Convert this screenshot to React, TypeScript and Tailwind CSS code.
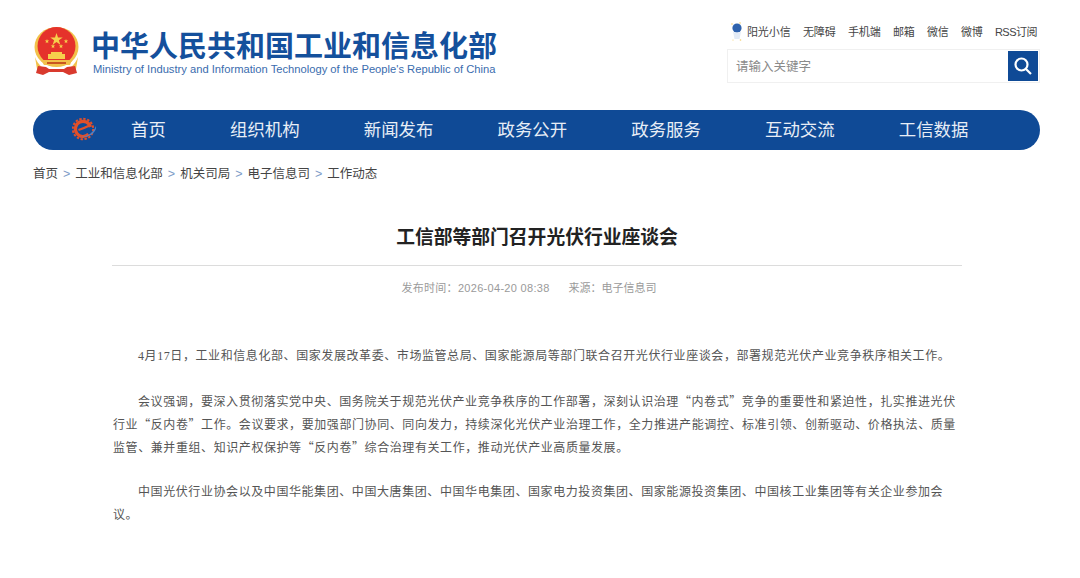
const cjk = "font-['Liberation_Sans','Noto_Sans_CJK_SC',sans-serif]";

const navItems = ["首页", "组织机构", "新闻发布", "政务公开", "政务服务", "互动交流", "工信数据"];
const topLinks = ["无障碍", "手机端", "邮箱", "微信", "微博"];
const crumbs = ["工业和信息化部", "机关司局", "电子信息司", "工作动态"];

function Emblem() {
  return (
    <svg width="47" height="50" viewBox="0 0 47 50" className="shrink-0">
      <ellipse cx="23.5" cy="20" rx="22" ry="20" fill="#f2c14a" />
      <path d="M2 30c3 8 8 12 14 13h15c6-1 11-5 14-13l-2 12-8 2H11l-7-2z" fill="#f2c14a" />
      <circle cx="23.5" cy="19" r="19" fill="#e5322b" />
      <path d="M23.5 6l1.5 4.4h4.7l-3.8 2.8 1.4 4.5-3.8-2.8-3.8 2.8 1.4-4.5-3.8-2.8H22z" fill="#f6cf4c" />
      <path d="M14 12l.6 1.6h1.7l-1.4 1 .5 1.7-1.4-1-1.4 1 .5-1.7-1.4-1h1.7zM33 12l.6 1.6h1.7l-1.4 1 .5 1.7-1.4-1-1.4 1 .5-1.7-1.4-1h1.7zM20 17l.6 1.6h1.7l-1.4 1 .5 1.7-1.4-1-1.4 1 .5-1.7-1.4-1h1.7zM28 17l.6 1.6h1.7l-1.4 1 .5 1.7-1.4-1-1.4 1 .5-1.7-1.4-1h1.7z" fill="#f6cf4c" />
      <path d="M18 25h11v2h3v5H15v-5h3z" fill="#f6cf4c" />
      <path d="M8 33h31l-2 5H11z" fill="#f2c14a" />
      <path d="M14 35h19v2H14z" fill="#c9561f" />
      <path d="M5 39l8 1 3 2h15l3-2 8-1 2 7-8 2-6-3H16l-6 3-7-2z" fill="#d93a2e" />
    </svg>
  );
}

function NavLogo() {
  return (
    <svg width="26" height="26" viewBox="0 0 26 26">
      <circle cx="11" cy="12" r="10.2" fill="none" stroke="#e2502a" strokeWidth="2" strokeDasharray="2.4 1.6" />
      <path d="M16.5 17.2A7.6 7.6 0 1 1 18.4 10" fill="none" stroke="#e2502a" strokeWidth="3.2" />
      <path d="M6.5 13c3-1 8-3 11-4.500" fill="none" stroke="#e2502a" strokeWidth="2.2" />
      <path d="M7 19.500c7 1.500 14-3 17-10.500 1.200 5.500-6.500 13-17 10.500z" fill="#4f83c8" />
    </svg>
  );
}

function SunIcon() {
  return (
    <svg width="14" height="20" viewBox="0 0 14 20" className="shrink-0">
      <circle cx="7" cy="6" r="4.6" fill="#2f62ad" />
      <path d="M3 9.500c2 1.600 6 1.600 8 0l-1.500 7.500h-5z" fill="#e3ebf6" />
      <circle cx="2" cy="2" r="0.8" fill="#f3d071" />
      <circle cx="10" cy="1" r="0.8" fill="#f3d071" />
      <circle cx="10.500" cy="18" r="0.8" fill="#f3d071" />
      <circle cx="3" cy="18" r="0.6" fill="#f3d071" />
    </svg>
  );
}

export default function App() {
  return (
    <div className={`h-[578px] w-[1080px] overflow-hidden bg-white ${cjk}`}>
      <header className="flex items-start justify-between pl-[33px] pr-[40px] pt-[21px]">
        <div className="mt-[6px] flex items-center gap-[11px]">
          <Emblem />
          <div className="flex flex-col">
            <span className="pt-[2px] text-[29px] font-bold leading-[31px] text-[#14509c] whitespace-nowrap">
              中华人民共和国工业和信息化部
            </span>
            <span className="ml-[2px] text-[11.2px] leading-[12px] text-[#3a6cae] whitespace-nowrap">
              Ministry of Industry and Information Technology of the People's Republic of China
            </span>
          </div>
        </div>
        <div className="flex flex-col items-end">
          <div className="mr-[3px] mt-[1px] flex h-[20px] items-center gap-[12px] text-[11px] text-[#444]">
            <span className="flex items-center gap-[3px]">
              <SunIcon />
              阳光小信
            </span>
            {topLinks.map((item) => (
              <span key={item}>{item}</span>
            ))}
            <span className="tracking-[-0.5px]">RSS订阅</span>
          </div>
          <div className="mt-[7px] flex h-[34px] w-[313px] items-center justify-between border border-[#f0f0f0] pl-[8px] pr-[1px]">
            <span className="pt-[3px] text-[12.5px] text-[#8a8a8a]">请输入关键字</span>
            <div className="flex h-[30px] w-[30px] items-center justify-center bg-[#0f4a96]">
              <svg width="20" height="20" viewBox="0 0 20 20" fill="none" stroke="white" strokeWidth="2.2">
                <circle cx="8.500" cy="8.500" r="6" />
                <path d="M13 13l5 5" />
              </svg>
            </div>
          </div>
        </div>
      </header>

      <nav className="mx-[33px] mt-[27px] flex h-[40px] w-[1007px] items-center rounded-[20px] bg-[#0f4a96] pl-[39px]">
        <NavLogo />
        <ul className="ml-[33px] flex gap-[64.2px] text-[17.4px] text-[#e8eef6]">
          {navItems.map((item) => (
            <li key={item}>{item}</li>
          ))}
        </ul>
      </nav>

      <div className="ml-[33px] mt-[15px] flex h-[18px] items-center gap-[5px] text-[12.5px] text-[#444]">
        <span>首页</span>
        {crumbs.map((item) => (
          <span key={item} className="flex items-center gap-[5px]">
            <span className="text-[#7d9cc8]">&gt;</span>
            {item}
          </span>
        ))}
      </div>

      <main className="ml-[112px] w-[850px]">
        <h1 className="mt-[42px] text-center text-[18.8px] font-bold leading-[26px] text-[#222]">
          工信部等部门召开光伏行业座谈会
        </h1>
        <div className="mt-[14px] border-t border-[#dcdcdc]" />
        <div className="mt-[14px] flex justify-center gap-[19px] pr-[16px] text-[11px] text-[#9a9a9a]">
          <span className="tracking-[0.3px]">发布时间：2026-04-20 08:38</span>
          <span>来源：电子信息司</span>
        </div>
        <article className="mt-[46px] pl-[1px] font-['Noto_Sans_CJK_SC',sans-serif] text-[12px] leading-[23px] tracking-[0.58px] text-[#555]">
          <p className="indent-[25px]">
            <span className="font-['Liberation_Serif',serif]">4</span>月<span className="font-['Liberation_Serif',serif]">17</span>日，工业和信息化部、国家发展改革委、市场监管总局、国家能源局等部门联合召开光伏行业座谈会，部署规范光伏产业竞争秩序相关工作。
          </p>
          <p className="mt-[21px] indent-[25px]">
            会议强调，要深入贯彻落实党中央、国务院关于规范光伏产业竞争秩序的工作部署，深刻认识治理“内卷式”竞争的重要性和紧迫性，扎实推进光伏行业“反内卷”工作。会议要求，要加强部门协同、同向发力，持续深化光伏产业治理工作，全力推进产能调控、标准引领、创新驱动、价格执法、质量监管、兼并重组、知识产权保护等“反内卷”综合治理有关工作，推动光伏产业高质量发展。
          </p>
          <p className="mt-[21px] indent-[25px]">
            中国光伏行业协会以及中国华能集团、中国大唐集团、中国华电集团、国家电力投资集团、国家能源投资集团、中国核工业集团等有关企业参加会议。
          </p>
        </article>
      </main>
    </div>
  );
}
